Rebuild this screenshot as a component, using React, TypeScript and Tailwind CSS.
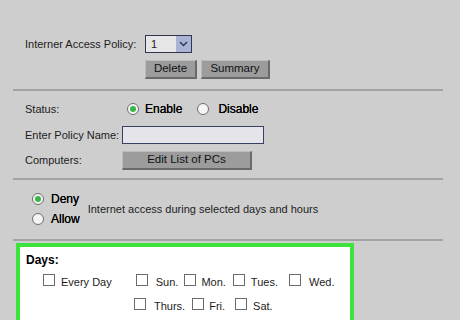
import React from 'react';

function Radio({ on }: { on?: boolean }) {
  return (
    <span className="flex h-[12px] w-[12px] items-center justify-center rounded-full border border-[#6f6f6f] bg-[#f4f4f4]">
      {on && <span className="h-[6px] w-[6px] rounded-full bg-[#3bb54a]" />}
    </span>
  );
}

function Box() {
  return <span className="inline-block h-[12px] w-[12px] border border-[#6b6b6b] bg-white" />;
}

function GrayButton({ label, w }: { label: string; w: string }) {
  return (
    <div className={`flex h-[19px] items-center justify-center whitespace-nowrap border-b-2 border-r-2 border-[#6a6a6a] border-l border-t border-l-[#bcbcbc] border-t-[#bcbcbc] bg-[#9c9c9c] text-[11.5px] text-[#111] ${w}`}>
      {label}
    </div>
  );
}

function Divider() {
  return <div className="ml-[13px] h-[2px] w-[430px] bg-[#a3a3a3]" />;
}

export default function App() {
  return (
    <div className="h-[320px] w-[460px] overflow-hidden whitespace-nowrap bg-[#cecece] text-[11px] text-[#1c1c1c] [font-family:'Liberation_Sans',Arial,sans-serif]">
      {/* Policy picker */}
      <div className="pl-[25px] pt-[35px]">
        <div className="flex items-center">
          <span className="w-[120px]">Interner Access Policy:</span>
          <div className="flex h-[18px] w-[47px] border border-[#2f3552] bg-[#e6e6e6]">
            <span className="flex-1 pl-[5px] leading-[16px]">1</span>
            <span className="flex w-[15px] items-center justify-center bg-[#a9b4d4]">
              <svg width="9" height="6" viewBox="0 0 9 6">
                <path d="M1 1l3.5 3.5L8 1" fill="none" stroke="#2c3560" strokeWidth="1.4" />
              </svg>
            </span>
          </div>
        </div>
        <div className="ml-[120px] mt-[7px] flex gap-[4px]">
          <GrayButton label="Delete" w="w-[52px]" />
          <GrayButton label="Summary" w="w-[69px]" />
        </div>
      </div>
      <div className="mt-[10px]">
        <Divider />
      </div>

      {/* Status / name / computers */}
      <div className="pl-[25px] pt-[10px]">
        <div className="flex h-[16px] items-center">
          <span className="w-[102px]">Status:</span>
          <Radio on />
          <span className="ml-[6px] text-[12px] text-black [text-shadow:0_0_0.3px_#000]">Enable</span>
          <span className="ml-[15px]">
            <Radio />
          </span>
          <span className="ml-[9px] text-[12px] text-black [text-shadow:0_0_0.3px_#000]">Disable</span>
        </div>
        <div className="mt-[9px] flex items-center">
          <span className="w-[97px]">Enter Policy Name:</span>
          <div className="h-[18px] w-[142px] border border-[#3a4060] bg-[#e4e4ea]" />
        </div>
        <div className="mt-[7px] flex items-center">
          <span className="w-[97px]">Computers:</span>
          <GrayButton label="Edit List of PCs" w="w-[130px]" />
        </div>
      </div>
      <div className="mt-[8px]">
        <Divider />
      </div>

      {/* Deny / Allow */}
      <div className="flex items-center pl-[32px] pt-[13px]">
        <div className="flex flex-col gap-[8px]">
          <div className="flex h-[12px] items-center">
            <Radio on />
            <span className="ml-[7px] text-[12px] text-black [text-shadow:0_0_0.3px_#000]">Deny</span>
          </div>
          <div className="flex h-[12px] items-center">
            <Radio />
            <span className="ml-[7px] text-[12px] text-black [text-shadow:0_0_0.3px_#000]">Allow</span>
          </div>
        </div>
        <span className="ml-[8px]">Internet access during selected days and hours</span>
      </div>
      <div className="mt-[14px]">
        <Divider />
      </div>

      {/* Days */}
      <div className="ml-[16px] mt-[2px] h-[90px] w-[338px] border-[4px] border-[#3de43d] bg-white pl-[6px] pt-[4px]">
        <div className="text-[12px] text-black [font-weight:600]">Days:</div>
        <div className="mt-[5px] flex items-center">
          <span className="ml-[17px]"><Box /></span>
          <span className="ml-[6px]">Every Day</span>
          <span className="ml-[24px]"><Box /></span>
          <span className="ml-[8px]">Sun.</span>
          <span className="ml-[6px]"><Box /></span>
          <span className="ml-[5px]">Mon.</span>
          <span className="ml-[7px]"><Box /></span>
          <span className="ml-[6px]">Tues.</span>
          <span className="ml-[11px]"><Box /></span>
          <span className="ml-[8px]">Wed.</span>
        </div>
        <div className="mt-[7px] flex items-center">
          <span className="ml-[108px]"><Box /></span>
          <span className="ml-[8px]">Thurs.</span>
          <span className="ml-[7px]"><Box /></span>
          <span className="ml-[5px]">Fri.</span>
          <span className="ml-[10px]"><Box /></span>
          <span className="ml-[6px]">Sat.</span>
        </div>
      </div>
    </div>
  );
}
